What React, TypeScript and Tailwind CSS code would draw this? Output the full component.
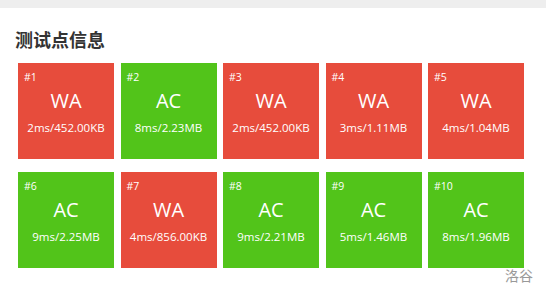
import React from 'react';

type Case = { id: number; status: 'AC' | 'WA'; detail: string };

const cases: Case[] = [
  { id: 1, status: 'WA', detail: '2ms/452.00KB' },
  { id: 2, status: 'AC', detail: '8ms/2.23MB' },
  { id: 3, status: 'WA', detail: '2ms/452.00KB' },
  { id: 4, status: 'WA', detail: '3ms/1.11MB' },
  { id: 5, status: 'WA', detail: '4ms/1.04MB' },
  { id: 6, status: 'AC', detail: '9ms/2.25MB' },
  { id: 7, status: 'WA', detail: '4ms/856.00KB' },
  { id: 8, status: 'AC', detail: '9ms/2.21MB' },
  { id: 9, status: 'AC', detail: '5ms/1.46MB' },
  { id: 10, status: 'AC', detail: '8ms/1.96MB' },
];

const CaseCard = ({ c }: { c: Case }) => {
  const bg = c.status === 'AC' ? 'bg-[#52c41a]' : 'bg-[#e74c3c]';
  return (
    <div className={`${bg} w-[96px] h-[96px] flex flex-col text-white`}>
      <div className="pl-[6px] pt-[7px] text-[10.5px] leading-[14px] font-medium">#{c.id}</div>
      <div className="mt-[3px] text-center text-[20px] leading-[28px]">{c.status}</div>
      <div className="mt-[5px] text-center text-[11.5px] leading-[16px]">{c.detail}</div>
    </div>
  );
};

export default function App() {
  const rows = [cases.slice(0, 5), cases.slice(5, 10)];
  return (
    <div
      className="w-[546px] h-[297px] bg-white flex flex-col"
      style={{ fontFamily: '"Open Sans", "Noto Sans CJK SC", sans-serif' }}
    >
      <div className="h-[8px] bg-[#eeeeee]" />
      <div className="px-[15px] pt-[19px]">
        <h2 className="text-[18px] leading-[26px] font-bold text-[#333333]">测试点信息</h2>
      </div>
      <div className="pl-[18px] mt-[10px] flex flex-col gap-[13px]">
        {rows.map((row, i) => (
          <div key={i} className="flex gap-[6.5px]">
            {row.map(c => (
              <CaseCard key={c.id} c={c} />
            ))}
          </div>
        ))}
      </div>
      <div className="flex justify-end pr-[13px] mt-[-2px]">
        <span className="text-[14px] leading-[20px] text-[#999999]">洛谷</span>
      </div>
    </div>
  );
}
